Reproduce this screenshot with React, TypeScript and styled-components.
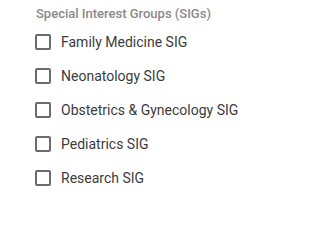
import styled, { createGlobalStyle } from "styled-components";

const GlobalStyle = createGlobalStyle`
  body {
    margin: 0;
    background: #ffffff;
    font-family: Roboto, "Liberation Sans", sans-serif;
  }
`;

const Group = styled.div`
  padding: 6px 0 0 35px;
`;

const Heading = styled.div`
  padding-left: 1px;
  font-size: 13px;
  line-height: 16px;
  font-weight: 500;
  color: #8a8a8a;
`;

const List = styled.div`
  display: flex;
  flex-direction: column;
  margin-top: 3px;
`;

const Row = styled.label`
  display: flex;
  align-items: center;
  gap: 10px;
  height: 34px;
  cursor: pointer;
`;

const Box = styled.span`
  box-sizing: border-box;
  width: 16px;
  height: 16px;
  border: 2px solid #6b6b6b;
  border-radius: 2px;
  flex-shrink: 0;
`;

const Name = styled.span`
  font-size: 14px;
  line-height: 20px;
  color: #3c3c3c;
`;

const groups = [
  "Family Medicine SIG",
  "Neonatology SIG",
  "Obstetrics & Gynecology SIG",
  "Pediatrics SIG",
  "Research SIG",
];

export default function App() {
  return (
    <>
      <GlobalStyle />
      <Group role="group" aria-label="Special Interest Groups (SIGs)">
        <Heading>Special Interest Groups (SIGs)</Heading>
        <List>
          {groups.map((g) => (
            <Row key={g}>
              <Box />
              <Name>{g}</Name>
            </Row>
          ))}
        </List>
      </Group>
    </>
  );
}
